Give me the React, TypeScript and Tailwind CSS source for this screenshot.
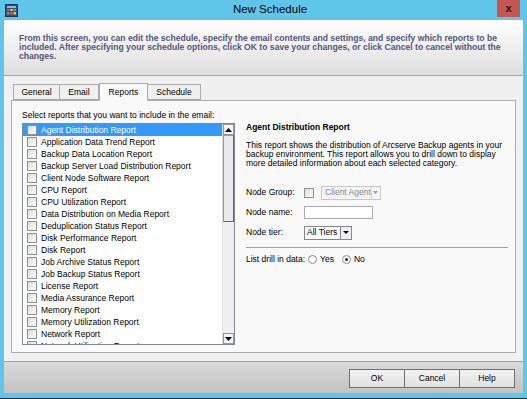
import React from 'react';

// New Schedule dialog — Reports tab

const reports = [
  'Agent Distribution Report',
  'Application Data Trend Report',
  'Backup Data Location Report',
  'Backup Server Load Distribution Report',
  'Client Node Software Report',
  'CPU Report',
  'CPU Utilization Report',
  'Data Distribution on Media Report',
  'Deduplication Status Report',
  'Disk Performance Report',
  'Disk Report',
  'Job Archive Status Report',
  'Job Backup Status Report',
  'License Report',
  'Media Assurance Report',
  'Memory Report',
  'Memory Utilization Report',
  'Network Report',
  'Network Utilization Report',
];

const tabs = [
  { name: 'General', w: 'w-[47px]' },
  { name: 'Email', w: 'w-[39px]' },
  { name: 'Reports', w: 'w-[49px]' },
  { name: 'Schedule', w: 'w-[53px]' },
];

function AppIcon() {
  return (
    <svg width="13" height="13" viewBox="0 0 13 13">
      <rect x="0.5" y="0.5" width="12" height="12" fill="#2d4f86" stroke="#1b335c" />
      <rect x="2" y="2" width="9" height="2" fill="#8fb3e0" />
      <rect x="2" y="5" width="2.5" height="2" fill="#e84a3a" />
      <rect x="5.3" y="5" width="2.5" height="2" fill="#f2c230" />
      <rect x="8.5" y="5" width="2.5" height="2" fill="#4fb848" />
      <rect x="2" y="8" width="2.5" height="2.5" fill="#4fb848" />
      <rect x="5.3" y="8" width="2.5" height="2.5" fill="#e84a3a" />
      <rect x="8.5" y="8" width="2.5" height="2.5" fill="#f2c230" />
    </svg>
  );
}

function Check() {
  return (
    <span className="h-[10px] w-[10px] shrink-0 border border-[#8e8f8f] bg-gradient-to-br from-[#dcdcdc] to-white" />
  );
}

function Arrow({ up }: { up?: boolean }) {
  return (
    <svg width="7" height="4" viewBox="0 0 7 4">
      {up ? <path d="M0 4 L3.5 0 L7 4 Z" fill="#000" /> : <path d="M0 0 L3.5 4 L7 0 Z" fill="#000" />}
    </svg>
  );
}

function Radio({ on }: { on?: boolean }) {
  return (
    <span className="flex h-[9px] w-[9px] shrink-0 items-center justify-center rounded-full border border-[#8e8f8f] bg-white">
      {on && <span className="h-[3px] w-[3px] rounded-full bg-[#222]" />}
    </span>
  );
}

export default function App() {
  return (
    <div
      className="flex h-[399px] w-[527px] flex-col bg-[#60c6e9] text-[8.5px] text-black"
      style={{ fontFamily: '"Liberation Sans", Arial, sans-serif' }}
    >
      {/* title bar */}
      <div className="relative flex h-[20px] shrink-0 items-center px-[5px]">
        <AppIcon />
        <div className="flex-1 text-center text-[11.5px] leading-none">New Schedule</div>
        <div className="absolute right-[7px] top-0 flex h-[17px] w-[23px] items-center justify-center bg-[#c75650] text-[11px] font-bold leading-none text-[#1a1a1a]">
          x
        </div>
      </div>

      <div className="mx-[4px] flex min-h-0 flex-1 flex-col bg-[#f0f0f0]">
        {/* header */}
        <div className="h-[56px] shrink-0 border-b border-[#a6a6a6] bg-gradient-to-b from-white to-[#dedede] px-[15px] pt-[14px]">
          <p className="text-[8.6px] font-bold leading-[9px] text-[#55557f]">
            From this screen, you can edit the schedule, specify the email contents and settings, and specify which reports to be
            included. After specifying your schedule options, click OK to save your changes, or click Cancel to cancel without the
            changes.
          </p>
        </div>

        {/* body */}
        <div className="flex flex-1 flex-col px-[7px] pt-[7px]">
          <div className="flex items-end pl-[2px]">
            {tabs.map((t, i) => {
              const sel = t.name === 'Reports';
              return (
                <div
                  key={t.name}
                  className={
                    (sel
                      ? 'relative z-10 -mb-px h-[18px] border border-b-0 bg-[#f9f9f9] '
                      : 'h-[16px] border bg-[#f0f0f0] ' + (i === 0 ? '' : 'border-l-0 ')) +
                    'flex items-center justify-center border-[#acacac] ' +
                    t.w
                  }
                >
                  {t.name}
                </div>
              );
            })}
          </div>
          <div className="flex h-[253px] border border-[#acacac] bg-[#f9f9f9] pl-[10px] pr-[6px] pt-[9px]">
            {/* list column */}
            <div className="flex w-[213px] flex-col">
              <div className="leading-[11px]">Select reports that you want to include in the email:</div>
              <div className="mt-[2px] flex h-[222px] overflow-hidden border border-[#828790] bg-white">
                <div className="flex-1 overflow-hidden">
                  {reports.map((r, i) => (
                    <div
                      key={r}
                      className={
                        'flex h-[12px] items-center gap-[4px] pl-[4px] whitespace-nowrap ' +
                        (i === 0 ? 'bg-[#3399ff] text-white' : '')
                      }
                    >
                      <Check />
                      <span>{r}</span>
                    </div>
                  ))}
                </div>
                <div className="flex w-[12px] shrink-0 flex-col border-l border-[#e0e0e0] bg-[#f0f0f0]">
                  <div className="flex h-[11px] items-center justify-center border border-[#999] bg-[#f4f4f4]">
                    <Arrow up />
                  </div>
                  <div className="h-[87px] border border-[#999] border-b-[#666] border-r-[#666] bg-[#eaeaea]" />
                  <div className="flex-1" />
                  <div className="flex h-[11px] items-center justify-center border border-[#999] bg-[#f4f4f4]">
                    <Arrow />
                  </div>
                </div>
              </div>
            </div>

            {/* detail column */}
            <div className="ml-[11px] flex flex-1 flex-col pt-[12px]">
              <div className="font-bold leading-[10px]">Agent Distribution Report</div>
              <p className="mt-[9px] leading-[9px]">
                This report shows the distribution of Arcserve Backup agents in your
                backup environment. This report allows you to drill down to display
                more detailed information about each selected category.
              </p>
              <div className="mt-[18px] flex flex-col gap-[7px]">
                <div className="flex h-[13px] items-center whitespace-nowrap">
                  <span className="w-[58px]">Node Group:</span>
                  <Check />
                  <div className="ml-[7px] flex h-[14px] w-[60px] items-center border border-[#c8c8c8] bg-[#f4f4f4] pl-[3px] text-[#8a8a8a]">
                    <span className="flex-1">Client Agent</span>
                    <span className="flex h-full w-[10px] items-center justify-center border-l border-[#d6d6d6]">
                      <svg width="5" height="3" viewBox="0 0 5 3"><path d="M0 0 L2.5 3 L5 0 Z" fill="#a0a0a0" /></svg>
                    </span>
                  </div>
                </div>
                <div className="flex h-[13px] items-center whitespace-nowrap">
                  <span className="w-[58px]">Node name:</span>
                  <div className="h-[13px] w-[69px] border border-[#abadb3] bg-white" />
                </div>
                <div className="flex h-[13px] items-center whitespace-nowrap">
                  <span className="w-[58px]">Node tier:</span>
                  <div className="flex h-[14px] w-[48px] items-center border border-[#828790] bg-white pl-[2px]">
                    <span className="flex-1">All Tiers</span>
                    <span className="flex h-full w-[11px] items-center justify-center border-l border-[#828790] bg-[#f0f0f0]">
                      <svg width="6" height="3" viewBox="0 0 6 3"><path d="M0 0 L3 3 L6 0 Z" fill="#000" /></svg>
                    </span>
                  </div>
                </div>
              </div>
              <div className="mt-[8px] mr-[1px] border-t border-[#a0a0a0]" />
              <div className="mt-[6px] flex h-[10px] items-center whitespace-nowrap">
                <span className="mr-[3px]">List drill in data:</span>
                <Radio />
                <span className="ml-[3px] mr-[8px]">Yes</span>
                <Radio on />
                <span className="ml-[3px]">No</span>
              </div>
            </div>
          </div>
        </div>

        {/* footer */}
        <div className="mt-[8px] flex h-[32px] shrink-0 items-start justify-end border-t border-[#a0a0a0] bg-gradient-to-b from-[#dadada] to-[#c3c3c3] pr-[8px] pt-[7px]">
          {['OK', 'Cancel', 'Help'].map((b) => (
            <div
              key={b}
              className="-ml-px flex h-[19px] w-[56px] items-center justify-center border border-[#707070] bg-gradient-to-b from-[#f2f2f2] to-[#e2e2e2]"
            >
              {b}
            </div>
          ))}
        </div>
      </div>
      <div className="h-[5px] shrink-0" />
      <div className="h-px shrink-0 bg-[#2f2f2f]" />
    </div>
  );
}
